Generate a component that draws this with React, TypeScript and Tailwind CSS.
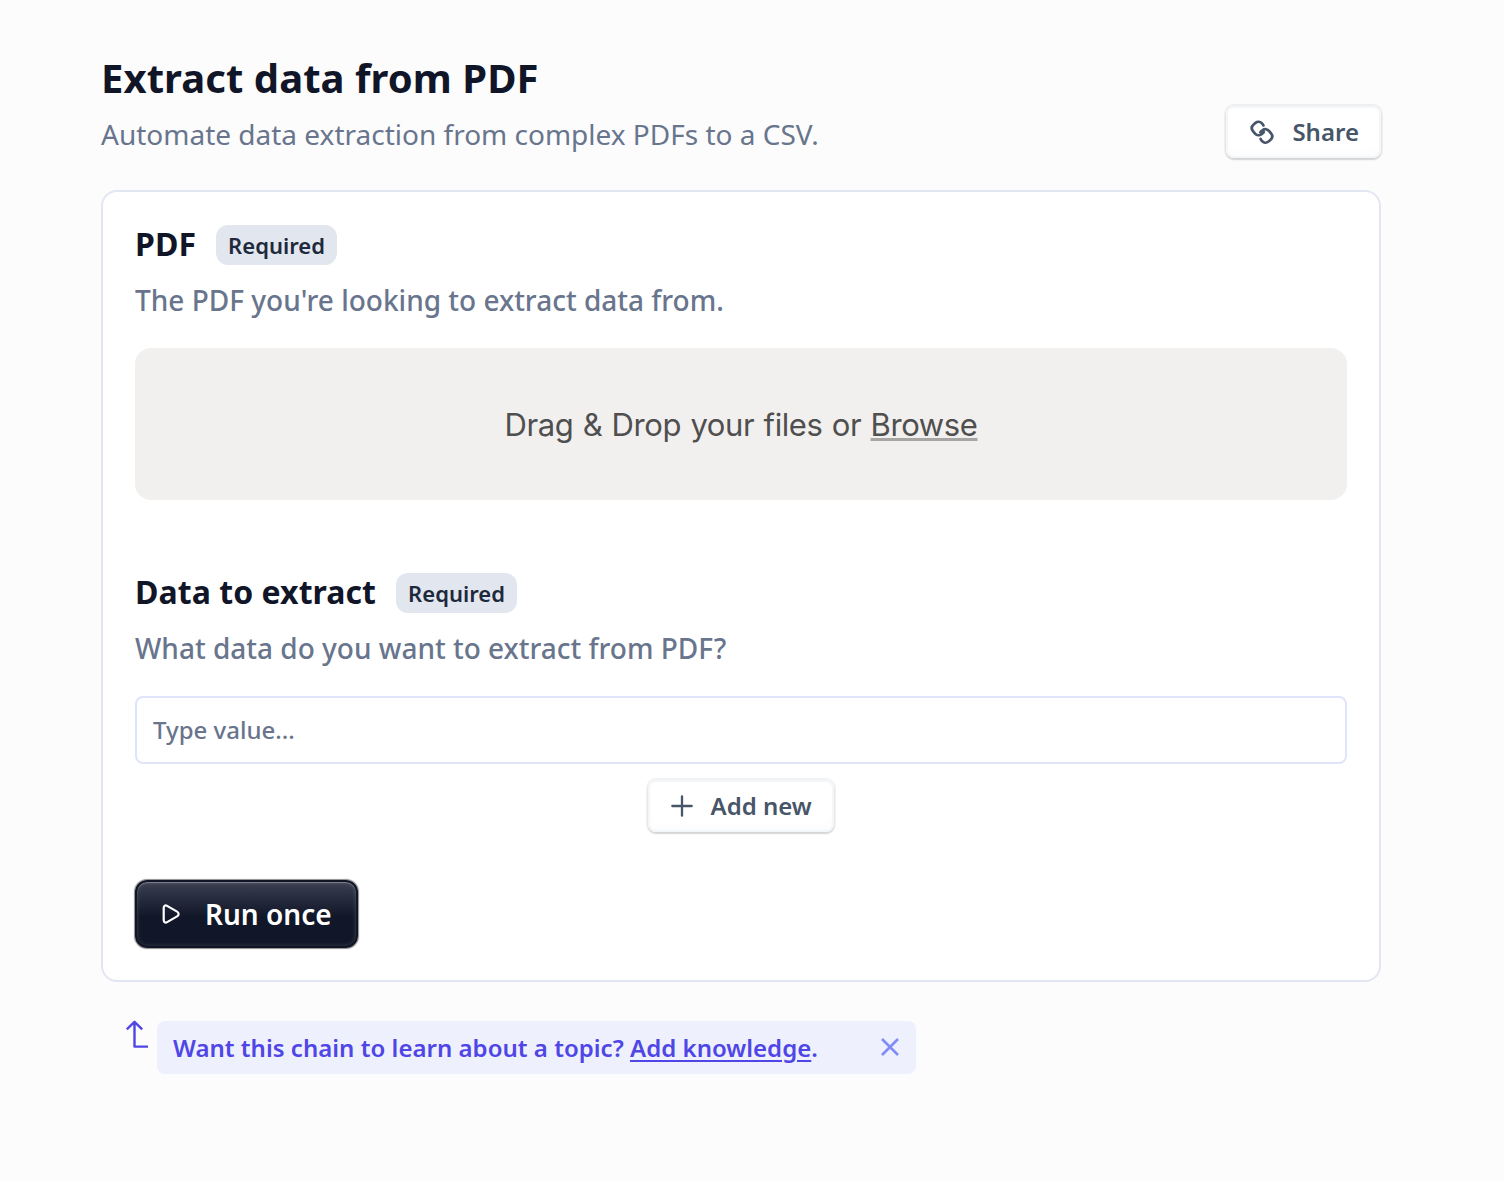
import type { ReactNode } from "react";

const LINK_LOOP =
  "M13.4 5.4C13.1 4.7 12.7 4.2 12.2 3.6C10.4 1.5 7.6 1.2 5.5 2.9L3.9 4.2C1.6 6.1 1.1 8.8 3 11.1L4.8 13.3C6.5 15.4 9.3 15.9 11.5 14.2L12.5 13.4C13 13 13.4 12.5 13.7 12";

function LinkIcon() {
  return (
    <svg width="24" height="24" viewBox="0 0 24 24" fill="none" stroke="currentColor" strokeWidth="2.7" strokeLinecap="round" strokeLinejoin="round">
      <path d={LINK_LOOP} />
      <path d={LINK_LOOP} transform="rotate(180 12 12.2)" />
    </svg>
  );
}

function PlusIcon() {
  return (
    <svg width="24" height="24" viewBox="0 0 24 24" fill="none" stroke="currentColor" strokeWidth="2.3" strokeLinecap="round">
      <path d="M12 2.3v19.4M2.3 12h19.4" />
    </svg>
  );
}

function PlayIcon() {
  return (
    <svg width="20" height="20" viewBox="0 0 20 20" fill="none" stroke="currentColor" strokeWidth="2.2" strokeLinejoin="round">
      <path d="M2.7 3.9v12.2c0 2.1 1.7 3 3.4 2l10-5.7c2-1.1 2-3.7 0-4.800L6.100 1.900C4.400.9 2.700 1.800 2.700 3.900Z" />
    </svg>
  );
}

function OutlineButton({ icon, label, className }: { icon: ReactNode; label: string; className: string }) {
  return (
    <button
      className={`flex h-[52px] items-center rounded-lg bg-white text-2xl font-semibold text-[#475569] shadow-[0_0_0_2px_rgba(15,23,42,0.055),0_2px_2px_rgba(0,0,0,0.12),inset_0_0_0_2px_#f4f7fa,inset_0_-6px_10px_rgba(0,0,0,0.015)] ${className}`}
    >
      {icon}
      <span>{label}</span>
    </button>
  );
}

function FieldHeader({ title, description }: { title: string; description: string }) {
  return (
    <div>
      <div className="flex h-10 items-start gap-5">
        <h2 className="text-[32px] leading-10 font-bold tracking-[0.05px] text-[#111528]">{title}</h2>
        <span className="mt-px flex h-10 w-[121px] items-center justify-center rounded-xl bg-[#e2e6ef] text-[22px] font-semibold text-[#1e293b]">
          Required
        </span>
      </div>
      <p className="mt-4 text-[28px] leading-[41px] font-medium text-[#68758d]">{description}</p>
    </div>
  );
}

export default function App() {
  return (
    <div className="min-h-[1182px] bg-[#fcfcfc] pt-[50px] pl-[101px] font-['Noto_Sans',sans-serif]">
      <header className="flex w-[1280px] items-end justify-between">
        <div>
          <h1 className="text-[40px] leading-[56px] font-bold tracking-[0.06px] text-[#111528]">Extract data from PDF</h1>
          <p className="mt-2 text-[28px] leading-10 text-[#68758d]">Automate data extraction from complex PDFs to a CSV.</p>
        </div>
        <OutlineButton icon={<LinkIcon />} label="Share" className="mb-[-4px] w-[155px] gap-[18.4px] pl-[24px]" />
      </header>

      <main className="mt-9 h-[792px] w-[1280px] rounded-2xl border-2 border-[#e2e6f0] bg-white px-8 pt-8">
        <FieldHeader title="PDF" description="The PDF you're looking to extract data from." />
        <div className="mt-[27px] flex h-[152px] items-center justify-center rounded-2xl bg-[#f1f0ee] pt-[3px] font-['Inter',sans-serif] text-[31px] tracking-[-0.4px] [word-spacing:1px] text-[#4f4f4f]">
          <span>
            Drag &amp; Drop your files or <span className="underline decoration-[#a7a6a4] decoration-[3px] underline-offset-[2px] [text-decoration-skip-ink:none]">Browse</span>
          </span>
        </div>

        <div className="mt-[72px]">
          <FieldHeader title="Data to extract" description="What data do you want to extract from PDF?" />
          <input
            className="mt-[27px] block h-[68px] w-full rounded-lg border-2 border-[#e0e4fb] bg-white px-4 pb-[2px] text-2xl font-medium text-[#111528] placeholder:text-[#68758d]"
            placeholder="Type value..."
          />
          <div className="mt-4 flex justify-center">
            <OutlineButton icon={<PlusIcon />} label="Add new" className="w-[186px] gap-[16.5px] pl-[22px]" />
          </div>
        </div>

        <button className="mt-12 flex h-[68px] w-[223px] items-center gap-[24px] rounded-xl border-2 border-[#111626] bg-linear-to-b from-[#3a4050] to-[#111628] to-55% pl-[24px] text-[28px] font-semibold text-white shadow-[0_0_1px_1px_rgba(0,0,0,0.45),inset_0_1px_1px_rgba(255,255,255,0.3),inset_0_0_3px_2px_rgba(255,255,255,0.08)]">
          <PlayIcon />
          <span>Run once</span>
        </button>
      </main>

      <div className="mt-[38px] flex items-start pl-6">
        <svg className="text-[#4f46e5]" width="32" height="30" viewBox="0 0 32 30" fill="none" stroke="currentColor" strokeWidth="2.4" strokeLinejoin="round">
          <path d="M1.8 9.3L9.5 1.8L17.2 9.3M9.5 2V26.6H23" />
        </svg>
        <div className="mt-px flex h-[53px] w-[759px] items-center justify-between rounded-lg bg-[#eef0fe] pr-[17px] pl-4 text-2xl font-semibold tracking-[0.02px] text-[#4f46e5]">
          <p>
            Want this chain to learn about a topic? <a className="underline decoration-2 underline-offset-[3px]">Add knowledge</a>.
          </p>
          <svg className="mb-px text-[#818cf8]" width="18" height="18" viewBox="0 0 18 18" fill="none" stroke="currentColor" strokeWidth="2.6">
            <path d="M1 1l16 16M17 1L1 17" />
          </svg>
        </div>
      </div>
    </div>
  );
}
